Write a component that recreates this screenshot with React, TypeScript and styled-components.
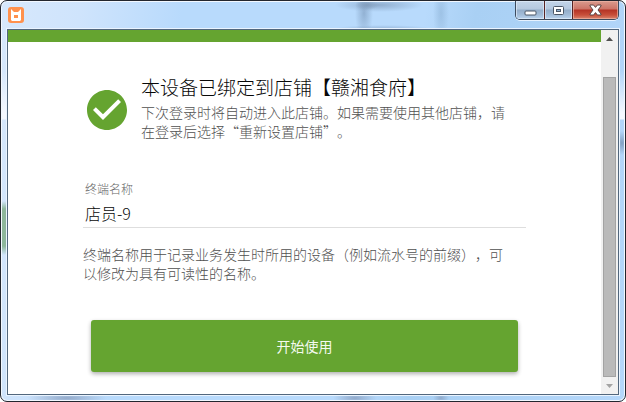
import React, { useState } from "react";
import styled, { createGlobalStyle } from "styled-components";

const GlobalStyle = createGlobalStyle`
  * { box-sizing: border-box; }
  body {
    margin: 0;
    background: #fff;
    font-family: "Noto Sans CJK SC", sans-serif;
    text-spacing-trim: space-all;
  }
`;

const green = "#65a430";

const WindowFrame = styled.div`
  display: flex;
  flex-direction: column;
  min-height: 100vh;
  padding: 0 6px 6px 5px;
  border: 1px solid #23262e;
  border-radius: 7px;
  box-shadow: inset 0 0 0 1px #f2f8ff;
  background:
    radial-gradient(ellipse 12px 5px at 366px 4px, #7f9ab9cc, #7f9ab900),
    radial-gradient(ellipse 44px 7px at 378px 4px, #86a2c3cc, #86a2c300),
    radial-gradient(ellipse 9px 26px at 363px 12px, #7f9dbfaa, #7f9dbf00),
    radial-gradient(ellipse 50px 4px at 382px 28px, #84a2c5aa, #84a2c500),
    radial-gradient(ellipse 8px 30px at 440px 12px, #8fb4d899, #8fb4d800),
    radial-gradient(ellipse 40px 6px at 66px 397px, #8297b8bb, #8297b800),
    radial-gradient(ellipse 22px 6px at 354px 397px, #8297b8bb, #8297b800),
    radial-gradient(ellipse 8px 5px at 440px 397px, #8297b8aa, #8297b800),
    radial-gradient(ellipse 8px 12px at 621px 142px, #7593b4cc, #7593b400),
    linear-gradient(#8fb5a000 200px, #8db79b 208px, #8db79b 245px, #8fb5a000 254px) 0 0 / 7px 100% no-repeat,
    linear-gradient(#f4f8ff00 70px, #f4f8ff 112px, #f4f8ff 118px, #f4f8ff00 119px) 0 0 / 7px 100% no-repeat,
    linear-gradient(#f4f8ff00 70px, #f4f8ff 112px, #f4f8ff 118px, #f4f8ff00 119px) 100% 0 / 7px 100% no-repeat,
    linear-gradient(100deg, #d7e8fc 0, #cfe4fc 80px, #b8dafc 180px, #b8dafc 420px, #a9d0f4 470px, #b5d7fa 100%);
`;

const TitleBar = styled.header`
  display: flex;
  justify-content: space-between;
  height: 28px;
  padding-left: 2px;
`;

const AppLogo = styled.svg`
  margin-top: 6px;
`;

const Controls = styled.div`
  display: flex;
  height: 19px;
  border: 1px solid #3c4b5e;
  border-top: 0;
  border-radius: 0 0 5px 5px;
  overflow: hidden;
  box-shadow: 0 1px 0 #e6f2ff;
`;

const ControlButton = styled.button<{ $danger?: boolean }>`
  display: flex;
  align-items: center;
  justify-content: center;
  width: ${(p) => (p.$danger ? 46 : 28)}px;
  padding: 0;
  border: 0;
  background: ${(p) =>
    p.$danger
      ? "linear-gradient(#d99b8e, #cc7467 8px, #b43325 9px, #c8503b 14px, #d98670)"
      : "linear-gradient(#c3d5e9, #b5c9df 8px, #93adc9 9px, #a3bdd9 14px, #bad4ee)"};
  box-shadow: inset 0 0 0 1px ${(p) => (p.$danger ? "#efb5a6aa" : "#e4effaaa")};

  & + & {
    border-left: 1px solid ${(p) => (p.$danger ? "#572323" : "#5e738b")};
  }
`;

const Viewport = styled.div`
  display: flex;
  flex: 1;
  margin: 0 0 0 1px;
  border: 1px solid #52677d;
  outline: 1px solid #eaf4ff;
  background: #fff;
`;

const Page = styled.main`
  flex: 1;
  border-top: 12px solid ${green};
`;

const Column = styled.form`
  max-width: 443px;
  margin: 0 auto;
  padding: 31px 0 20px;
`;

const Notice = styled.section`
  display: flex;
  gap: 10px;
`;

const CheckIcon = styled.svg`
  flex: none;
  margin-top: 13px;
`;

const NoticeBody = styled.div`
  padding-right: 8px;
`;

const Title = styled.h1`
  margin: 0;
  font-size: 19px;
  font-weight: 300;
  line-height: 28px;
  color: #080808;
`;

const Text = styled.p`
  margin: 2px 0 0;
  font-size: 14px;
  font-weight: 300;
  line-height: 19px;
  color: #505050;
`;

const Field = styled.div`
  display: flex;
  flex-direction: column;
  margin-top: 40px;
`;

const Label = styled.label`
  padding-left: 2px;
  font-size: 12px;
  font-weight: 300;
  line-height: 16px;
  color: #666;
`;

const TextInput = styled.input`
  height: 31px;
  padding: 2px 2px 0;
  border: 0;
  border-bottom: 1px solid #dedede;
  outline: 0;
  background: transparent;
  font: 300 16px "Noto Sans CJK SC", sans-serif;
  color: #080808;
`;

const Hint = styled(Text)`
  margin-top: 17px;
  padding-right: 10px;
`;

const StartButton = styled.button`
  display: block;
  width: calc(100% - 16px);
  height: 52px;
  margin: 37px 0 0 8px;
  border: 0;
  border-radius: 3px;
  background: ${green};
  box-shadow: 0 2px 4px #00000050;
  font: 400 14px "Noto Sans CJK SC", sans-serif;
  color: #f4faef;
`;

const ScrollTrack = styled.div`
  display: flex;
  flex-direction: column;
  align-items: center;
  width: 17px;
  background: #f1f1f1;
`;

const ScrollArrow = styled.button`
  display: flex;
  align-items: center;
  justify-content: center;
  width: 17px;
  height: 17px;
  padding: 0;
  border: 0;
  background: transparent;
`;

const ScrollThumb = styled.div`
  flex: 1;
  width: 13px;
  margin-top: 30px;
  border: 1px solid #a3a3a3;
  background: #bababa;
`;

export default function App() {
  const [name, setName] = useState("店员-9");
  return (
    <>
      <GlobalStyle />
      <WindowFrame>
        <TitleBar>
          <AppLogo width="16" height="16" viewBox="0 0 16 16" aria-hidden="true">
            <rect width="16" height="16" rx="3" fill="#ff914d" />
            <path d="M3 2l3 3h4l3-3v11l-1 1H4l-1-1z" fill="#fff" />
            <path d="M6 8h4v3H6z" fill="#ff914d" />
          </AppLogo>
          <Controls>
            <ControlButton aria-label="最小化">
              <svg width="13" height="13" viewBox="0 0 13 13">
                <rect x="1" y="7" width="11" height="4" rx="1" fill="#fff" stroke="#4a5666" />
              </svg>
            </ControlButton>
            <ControlButton aria-label="最大化">
              <svg width="13" height="11" viewBox="0 0 13 11">
                <rect x="1.5" y="1.5" width="10" height="8" rx="1" fill="#fff" stroke="#4a5666" />
                <rect x="4.5" y="4.5" width="4" height="2" fill="#8fb0d0" stroke="#4a5666" />
              </svg>
            </ControlButton>
            <ControlButton $danger aria-label="关闭">
              <svg width="13" height="12" viewBox="0 0 13 12">
                <path
                  d="M1 1h3.6l1.9 2.4L8.4 1H12v1L9 6l3 4v1H8.4L6.5 8.6 4.6 11H1v-1l3-4-3-4z"
                  fill="#fff"
                  stroke="#5b4444"
                />
              </svg>
            </ControlButton>
          </Controls>
        </TitleBar>
        <Viewport>
          <Page>
            <Column onSubmit={(e) => e.preventDefault()}>
              <Notice>
                <CheckIcon width="48" height="48" viewBox="0 0 24 24" fill={green} aria-hidden="true">
                  <path d="M12 2C6.48 2 2 6.48 2 12s4.48 10 10 10 10-4.48 10-10S17.52 2 12 2zm-2 15l-5-5 1.41-1.41L10 14.17l7.59-7.59L19 8l-9 9z" />
                </CheckIcon>
                <NoticeBody>
                  <Title>本设备已绑定到店铺【赣湘食府】</Title>
                  <Text>下次登录时将自动进入此店铺。如果需要使用其他店铺，请在登录后选择“重新设置店铺”。</Text>
                </NoticeBody>
              </Notice>
              <Field>
                <Label htmlFor="terminal-name">终端名称</Label>
                <TextInput id="terminal-name" value={name} onChange={(e) => setName(e.target.value)} />
              </Field>
              <Hint>终端名称用于记录业务发生时所用的设备（例如流水号的前缀），可以修改为具有可读性的名称。</Hint>
              <StartButton type="submit">开始使用</StartButton>
            </Column>
          </Page>
          <ScrollTrack>
            <ScrollArrow type="button" aria-label="向上滚动">
              <svg width="7" height="4" viewBox="0 0 7 4">
                <path d="M0 4L3.5 0 7 4z" fill="#505050" />
              </svg>
            </ScrollArrow>
            <ScrollThumb />
            <ScrollArrow type="button" aria-label="向下滚动">
              <svg width="7" height="4" viewBox="0 0 7 4">
                <path d="M0 0h7L3.5 4z" fill="#a3a3a3" />
              </svg>
            </ScrollArrow>
          </ScrollTrack>
        </Viewport>
      </WindowFrame>
    </>
  );
}
